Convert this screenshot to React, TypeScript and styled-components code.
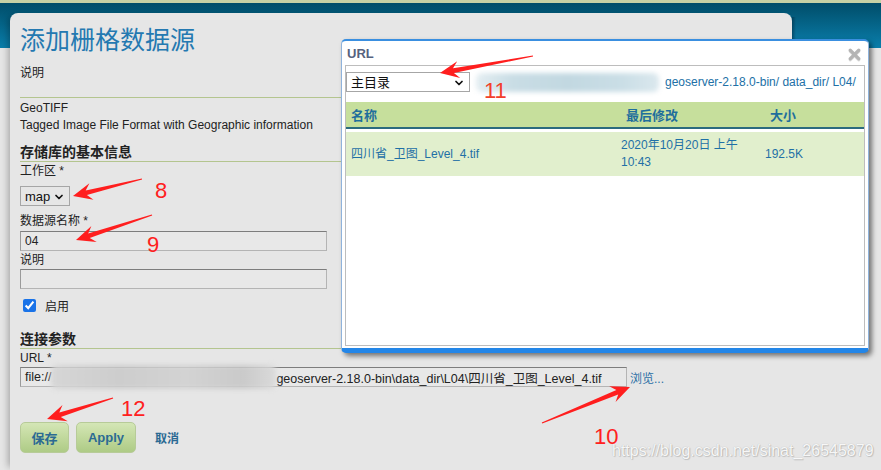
import React from "react";
import styled, { createGlobalStyle } from "styled-components";
import { ChevronDown, X } from "lucide-react";

const GlobalStyle = createGlobalStyle`
  html, body { margin: 0; padding: 0; }
  body {
    width: 881px; height: 470px; overflow: hidden;
    background: #e6e6e6;
    font-family: "Liberation Sans", "Noto Sans CJK SC", sans-serif;
    font-size: 12px; color: #222;
  }
`;

const Page = styled.div`
  position: relative;
  width: 881px;
  height: 470px;
  overflow: hidden;
  box-sizing: border-box;
  padding: 13px 0 0 10px;
  background: linear-gradient(
    to bottom,
    #c6d1a5 0, #c6d1a5 3px,
    #004d69 3px, #0a7eab 48px,
    #e6e6e6 48px
  );
`;

const Panel = styled.main`
  position: relative;
  width: 782px;
  height: 100%;
  box-sizing: border-box;
  background: #e6e6e6;
  border-radius: 8px 8px 0 0;
  box-shadow: -5px 0 7px -3px rgba(0, 0, 0, 0.28);
  padding: 10px 0 0 10px;
  display: flex;
  flex-direction: column;
`;

const PanelEdge = styled.span`
  position: absolute;
  right: -4px;
  top: 4px;
  width: 4px;
  height: 31px;
  background: linear-gradient(to right, rgba(0, 30, 50, 0.45), rgba(0, 30, 50, 0));
  pointer-events: none;
`;

const Title = styled.h1`
  margin: 0;
  font-family: "Noto Sans CJK SC", "Liberation Sans", sans-serif;
  font-weight: normal;
  font-size: 25px;
  line-height: 30px;
  color: #2479b1;
`;

const Text = styled.div<{ $mt?: number }>`
  margin-top: ${(p) => p.$mt ?? 0}px;
  line-height: ${(p) => (p.$mt !== undefined ? 16 : 17)}px;
  font-size: 12px;
`;

const Line = styled.div`
  margin-top: 16px;
  height: 1px;
  background: #b4c58f;
`;

const SectionHeading = styled.h3<{ $mt: number }>`
  margin: ${(p) => p.$mt}px 0 0;
  font-size: 14px;
  line-height: 18px;
  font-weight: bold;
  color: #222;
  border-bottom: 1px solid #b4c58f;
`;

const Label = styled.label<{ $mt: number }>`
  display: block;
  margin-top: ${(p) => p.$mt}px;
  font-size: 12px;
  line-height: 16px;
  color: #222;
`;

const SelectWrap = styled.div<{ $mt?: number; $w: number; $bg: string }>`
  position: relative;
  margin-top: ${(p) => p.$mt ?? 0}px;
  width: ${(p) => p.$w}px;
  height: 20px;
  flex: none;
  background: ${(p) => p.$bg};
  border: 1px solid #a6a6a6;
  box-sizing: border-box;
`;

const NativeSelect = styled.select`
  appearance: none;
  width: 100%;
  height: 100%;
  border: none;
  background: transparent;
  font-family: "Liberation Sans", "Noto Sans CJK SC", sans-serif;
  font-size: 13px;
  color: #111;
  padding: 0 16px 0 4px;
  margin: 0;
  outline: none;
`;

const SelectIcon = styled.span`
  position: absolute;
  right: 4px;
  top: 4px;
  display: flex;
  pointer-events: none;
  color: #111;
`;

const TextInput = styled.input<{ $mt: number }>`
  margin-top: ${(p) => p.$mt}px;
  width: 307px;
  height: 20px;
  box-sizing: border-box;
  border: 1px solid #b4b4b4;
  border-top-color: #7d7d7d;
  border-left-color: #9a9a9a;
  background: #e8e8e8;
  font-family: "Liberation Sans", sans-serif;
  font-size: 12px;
  padding: 0 4px;
  color: #222;
  outline: none;
`;

const CheckRow = styled.label`
  display: flex;
  align-items: center;
  gap: 9px;
  margin-top: 7px;
  height: 18px;
  padding-left: 3px;
  font-size: 12px;
  color: #222;
`;

const Check = styled.input`
  width: 13px;
  height: 13px;
  margin: 0;
  accent-color: #1a73e8;
`;

const UrlRow = styled.div`
  margin-top: 1px;
  display: flex;
  align-items: center;
  gap: 3px;
`;

const UrlField = styled.div`
  width: 607px;
  height: 20px;
  box-sizing: border-box;
  border: 1px solid #b4b4b4;
  border-top-color: #7d7d7d;
  border-left-color: #9a9a9a;
  background: #e8e8e8;
  display: flex;
  align-items: center;
  padding-left: 4px;
  font-size: 12.5px;
  color: #222;
  white-space: nowrap;
  overflow: visible;
`;

const Blur = styled.span<{ $w: number; $h: number; $tone: string }>`
  display: inline-block;
  flex: none;
  width: ${(p) => p.$w}px;
  height: ${(p) => p.$h}px;
  background: ${(p) => p.$tone};
  filter: blur(2.5px);
  border-radius: 6px;
`;

const BrowseLink = styled.a`
  color: #2a6fa5;
  font-size: 12px;
  text-decoration: none;
`;

const Buttons = styled.div`
  margin-top: 35px;
  display: flex;
  align-items: center;
  gap: 7px;
`;

const GreenButton = styled.button<{ $w: number }>`
  width: ${(p) => p.$w}px;
  height: 31px;
  border: 1px solid #b7cb98;
  border-radius: 5px;
  background: linear-gradient(to bottom, #d4e6b6 0%, #c3da9f 45%, #aecb86 100%);
  color: #2b6a93;
  font-family: "Liberation Sans", "Noto Sans CJK SC", sans-serif;
  font-weight: bold;
  font-size: 13px;
  padding: 0;
`;

const CancelLink = styled.a`
  margin-left: 12px;
  color: #2b6a93;
  font-weight: bold;
  font-size: 12px;
  text-decoration: none;
`;

/* ---------- dialog ---------- */

const Dialog = styled.section`
  position: absolute;
  left: 341px;
  top: 39px;
  width: 528px;
  height: 314px;
  box-sizing: border-box;
  background: #fff;
  border: 1px solid #8fb3dc;
  border-top: 2px solid #3a8fe0;
  border-bottom: 5px solid #2386e8;
  border-radius: 5px;
  box-shadow: 3px 3px 5px rgba(0, 0, 0, 0.5);
  display: flex;
  flex-direction: column;
`;

const DialogBar = styled.header`
  position: relative;
  height: 24px;
  display: flex;
  align-items: center;
  padding-left: 5px;
  font-size: 13px;
  font-weight: bold;
  color: #55627e;
`;

const CloseBtn = styled.span`
  position: absolute;
  right: 5px;
  top: 5px;
  display: flex;
  color: #b4b4b4;
  filter: drop-shadow(0 1px 0 rgba(0, 0, 0, 0.12));
`;

const DialogBody = styled.div`
  flex: 1;
  margin: 0 3px 2px;
  border: 1px solid #bdbdbd;
  padding-top: 6px;
  display: flex;
  flex-direction: column;
`;

const PathRow = styled.div`
  display: flex;
  align-items: center;
  gap: 6px;
`;

const PathText = styled.span`
  color: #2170a6;
  font-size: 12px;
  white-space: nowrap;
`;

const Grid = styled.div`
  display: grid;
  grid-template-columns: 270px 144px 1fr;
  align-items: center;
`;

const HeadRow = styled(Grid)`
  margin-top: 10px;
  height: 25px;
  background: #c6df9c;
  border-bottom: 2px solid #2b6b7e;
  font-weight: bold;
  font-size: 13px;
  color: #1f6e9c;
`;

const BodyRow = styled(Grid)`
  margin-top: 3px;
  height: 44px;
  background: #e1efcd;
  font-size: 12px;
  line-height: 17px;
  color: #1f70a6;
`;

const Cell = styled.div<{ $pl: number }>`
  padding-left: ${(p) => p.$pl}px;
`;

/* ---------- annotations ---------- */

const Overlay = styled.svg`
  position: absolute;
  left: 0;
  top: 0;
  pointer-events: none;
`;

const Watermark = styled.div`
  position: absolute;
  left: 612px;
  top: 442px;
  font-family: "Liberation Sans", sans-serif;
  font-size: 16px;
  color: rgba(255, 255, 255, 0.92);
  text-shadow: 0 0 1px rgba(0, 0, 0, 0.25), 1px 1px 1px rgba(0, 0, 0, 0.15);
  white-space: nowrap;
`;

function arrowPoints(tx: number, ty: number, hx: number, hy: number) {
  const dx = hx - tx;
  const dy = hy - ty;
  const L = Math.hypot(dx, dy);
  const ux = dx / L;
  const uy = dy / L;
  const nx = -uy;
  const ny = ux;
  const headLen = 19;
  const headW = 8.5;
  const shaftW = 2.4;
  const bx = hx - ux * headLen * 0.72;
  const by = hy - uy * headLen * 0.72;
  const wx = hx - ux * headLen;
  const wy = hy - uy * headLen;
  const pts = [
    [tx + nx * 0.5, ty + ny * 0.5],
    [bx + nx * shaftW, by + ny * shaftW],
    [wx + nx * headW, wy + ny * headW],
    [hx, hy],
    [wx - nx * headW, wy - ny * headW],
    [bx - nx * shaftW, by - ny * shaftW],
    [tx - nx * 0.5, ty - ny * 0.5],
  ];
  return pts.map((p) => `${p[0].toFixed(1)},${p[1].toFixed(1)}`).join(" ");
}

const arrows = [
  { t: [142, 179], h: [73, 196] },
  { t: [152, 215], h: [76, 240] },
  { t: [533, 56], h: [440, 73] },
  { t: [113, 398], h: [47, 419] },
  { t: [542, 423], h: [630, 387] },
];

const numbers = [
  { x: 155, y: 198, s: "8", c: "#ff2020" },
  { x: 147, y: 252, s: "9", c: "#ff2020" },
  { x: 484, y: 98, s: "11", c: "#f2402a" },
  { x: 121, y: 416, s: "12", c: "#ff2020" },
  { x: 594, y: 444, s: "10", c: "#ff2020" },
];

export default function App() {
  return (
    <Page>
      <GlobalStyle />
      <Panel>
        <PanelEdge />
        <Title>添加栅格数据源</Title>
        <Text $mt={12}>说明</Text>
        <Line />
        <Text style={{ marginTop: 2 }}>GeoTIFF</Text>
        <Text>Tagged Image File Format with Geographic information</Text>

        <SectionHeading $mt={9}>存储库的基本信息</SectionHeading>
        <Label $mt={1}>工作区 *</Label>
        <SelectWrap $mt={7} $w={50} $bg="#e6e6e6">
          <NativeSelect defaultValue="map">
            <option value="map">map</option>
          </NativeSelect>
          <SelectIcon>
            <ChevronDown size={12} strokeWidth={3.5} />
          </SelectIcon>
        </SelectWrap>
        <Label $mt={7}>数据源名称 *</Label>
        <TextInput $mt={2} defaultValue="04" />
        <Label $mt={1}>说明</Label>
        <TextInput $mt={1} defaultValue="" />
        <CheckRow>
          <Check type="checkbox" defaultChecked />
          启用
        </CheckRow>

        <SectionHeading $mt={16}>连接参数</SectionHeading>
        <Label $mt={1}>URL *</Label>
        <UrlRow>
          <UrlField>
            <span>file://</span>
            <Blur $w={225} $h={24} $tone="linear-gradient(90deg,#d6d6d6,#cdcdcd 30%,#d3d3d3 60%,#cacaca 85%,#dadada)" />
            <span>geoserver-2.18.0-bin\data_dir\L04\四川省_卫图_Level_4.tif</span>
          </UrlField>
          <BrowseLink href="#">浏览...</BrowseLink>
        </UrlRow>

        <Buttons>
          <GreenButton $w={49}>保存</GreenButton>
          <GreenButton $w={60}>Apply</GreenButton>
          <CancelLink href="#">取消</CancelLink>
        </Buttons>
      </Panel>

      <Dialog>
        <DialogBar>
          URL
          <CloseBtn>
            <X size={17} strokeWidth={4.5} />
          </CloseBtn>
        </DialogBar>
        <DialogBody>
          <PathRow>
            <SelectWrap $w={124} $bg="#fff">
              <NativeSelect defaultValue="root">
                <option value="root">主目录</option>
              </NativeSelect>
              <SelectIcon>
                <ChevronDown size={12} strokeWidth={3.5} />
              </SelectIcon>
            </SelectWrap>
            <Blur $w={183} $h={19} $tone="linear-gradient(90deg,#e4eef2,#c9dde5 20%,#c2d8e1 50%,#cadee6 80%,#dbe8ee)" />
            <PathText>geoserver-2.18.0-bin/ data_dir/ L04/</PathText>
          </PathRow>
          <HeadRow>
            <Cell $pl={5}>名称</Cell>
            <Cell $pl={10}>最后修改</Cell>
            <Cell $pl={10}>大小</Cell>
          </HeadRow>
          <BodyRow>
            <Cell $pl={5}>四川省_卫图_Level_4.tif</Cell>
            <Cell $pl={5}>
              2020年10月20日 上午
              <br />
              10:43
            </Cell>
            <Cell $pl={5}>192.5K</Cell>
          </BodyRow>
        </DialogBody>
      </Dialog>

      <Overlay width={881} height={470} viewBox="0 0 881 470">
        {arrows.map((a, i) => (
          <polygon key={i} points={arrowPoints(a.t[0], a.t[1], a.h[0], a.h[1])} fill="#ff1e1e" />
        ))}
        {numbers.map((n) => (
          <text
            key={n.s}
            x={n.x}
            y={n.y}
            fill={n.c}
            fontFamily="Liberation Sans, sans-serif"
            fontSize={22}
          >
            {n.s}
          </text>
        ))}
      </Overlay>

      <Watermark>https://blog.csdn.net/sinat_26545879</Watermark>
    </Page>
  );
}
